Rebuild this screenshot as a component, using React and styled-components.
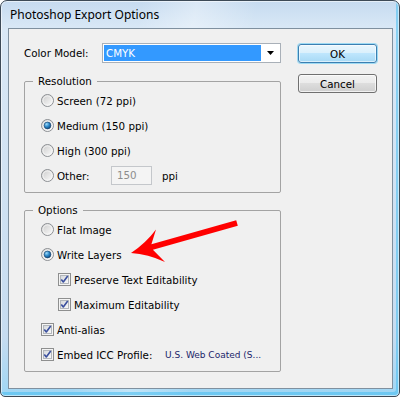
import React from 'react';
import styled, { createGlobalStyle } from 'styled-components';

const Global = createGlobalStyle`
  html, body { margin: 0; padding: 0; background: #ffffff; }
  body { width: 401px; height: 398px; overflow: hidden; }
`;

const Window = styled.div`
  position: relative;
  width: 400px;
  height: 397px;
  box-sizing: border-box;
  border: 1px solid #3d4a57;
  border-radius: 7px 7px 5px 5px;
  background:
    linear-gradient(100deg, rgba(255,255,255,0) 30%, rgba(255,255,255,0.35) 42%, rgba(255,255,255,0) 55%),
    linear-gradient(180deg, #c6dbf0 0%, #d9e8f6 7%, #d2e3f3 40%, #c6dcf0 85%, #9fd6f4 100%);
  box-shadow: inset 0 0 0 1px rgba(255,255,255,0.55), inset -2px -3px 0 1px rgba(70,190,240,0.55);
  display: flex;
  flex-direction: column;
  padding: 0 6px 7px 7px;
  font-family: "DejaVu Sans", Tahoma, sans-serif;
  font-size: 10.3px;
  color: #000;
`;

const TitleBar = styled.div`
  height: 27px;
  display: flex;
  align-items: center;
  padding-left: 2px;
  font-family: "Noto Sans", "Open Sans", sans-serif;
  font-size: 12px;
  color: #000;
`;

const Client = styled.div`
  flex: 1;
  border: 1px solid #7f909f;
  background: #f0f0f0;
  display: flex;
  gap: 17px;
  padding: 14px 0 0 15px;
`;

const LeftCol = styled.div`
  width: 257px;
  display: flex;
  flex-direction: column;
`;

const RightCol = styled.div`
  width: 79px;
  display: flex;
  flex-direction: column;
  gap: 11px;
  padding-top: 1px;
`;

const ModelRow = styled.div`
  display: flex;
  align-items: center;
  height: 20px;
`;

const ModelLabel = styled.span`
  width: 78px;
  flex: none;
`;

const Select = styled.div`
  flex: 1;
  height: 20px;
  box-sizing: border-box;
  border: 1px solid #a9b0b8;
  background: #fff;
  display: flex;
  padding: 1px;
`;

const SelValue = styled.div`
  flex: 1;
  background: #3399ff;
  color: #fff;
  line-height: 16px;
  padding-left: 2px;
`;

const SelArrow = styled.div`
  width: 18px;
  display: flex;
  align-items: center;
  justify-content: center;
`;

const Group = styled.fieldset`
  margin: ${p => p.$gap}px 0 0 0;
  padding: 0 0 4px 8px;
  border: 1px solid #a3a3a3;
  border-radius: 2px;
  min-width: 0;
`;

const Legend = styled.legend`
  padding: 0 5px;
  line-height: 13px;
`;

const Rows = styled.div`
  display: flex;
  flex-direction: column;
  padding-left: 8px;
`;

const Row = styled.div`
  height: 25px;
  display: flex;
  align-items: center;
  padding-left: ${p => (p.$indent ? 17 : 0)}px;
`;

const Text = styled.span`
  margin-left: 3px;
  white-space: nowrap;
  width: ${p => (p.$w ? `${p.$w}px` : 'auto')};
  flex: none;
`;

const NumInput = styled.div`
  width: 41px;
  height: 19px;
  box-sizing: border-box;
  border: 1px solid #c4c7cb;
  background: #f4f4f4;
  color: #8d8d8d;
  line-height: 17px;
  padding-left: 5px;
`;

const Unit = styled.span`
  margin-left: 10px;
`;

const Profile = styled.span`
  font-size: 9px;
  color: #1a246a;
  white-space: nowrap;
`;

const Button = styled.div`
  height: 19px;
  box-sizing: border-box;
  border-radius: 3px;
  border: 1px solid ${p => (p.$default ? '#3c7fb1' : '#707070')};
  background: ${p =>
    p.$default
      ? 'linear-gradient(180deg, #eaf6fd 0%, #d9f0fc 50%, #bee6fd 50%, #a7d9f5 100%)'
      : 'linear-gradient(180deg, #f2f2f2 0%, #ebebeb 50%, #dddddd 50%, #cfcfcf 100%)'};
  box-shadow: ${p => (p.$default ? '0 0 0 1px rgba(90,200,245,0.55), inset 0 0 0 1px rgba(255,255,255,0.6)' : 'inset 0 0 0 1px rgba(255,255,255,0.7)')};
  display: flex;
  align-items: center;
  justify-content: center;
`;

const Overlay = styled.svg`
  position: absolute;
  left: -1px;
  top: -1px;
  pointer-events: none;
`;

function Radio({ checked }) {
  return (
    <svg width="13" height="13" viewBox="0 0 13 13" style={{ flex: 'none' }}>
      <defs>
        <linearGradient id="rfill" x1="0" y1="0" x2="1" y2="1">
          <stop offset="0" stopColor="#c9c9c9" />
          <stop offset="1" stopColor="#ffffff" />
        </linearGradient>
        <radialGradient id="rdot" cx="0.35" cy="0.3" r="0.8">
          <stop offset="0" stopColor="#9fdcfb" />
          <stop offset="0.5" stopColor="#2a86c8" />
          <stop offset="1" stopColor="#103c6a" />
        </radialGradient>
      </defs>
      <circle cx="6.5" cy="6.5" r="6" fill="url(#rfill)" stroke="#8c8f93" />
      <circle cx="6.5" cy="6.5" r="4.6" fill="none" stroke="#f7f7f7" strokeWidth="0.8" />
      {checked && <circle cx="6.5" cy="6.5" r="3.4" fill="url(#rdot)" stroke="#15406b" strokeWidth="0.6" />}
    </svg>
  );
}

function Check() {
  return (
    <svg width="13" height="13" viewBox="0 0 13 13" style={{ flex: 'none' }}>
      <defs>
        <linearGradient id="cfill" x1="0" y1="0" x2="1" y2="1">
          <stop offset="0" stopColor="#d4d7da" />
          <stop offset="1" stopColor="#fbfbfb" />
        </linearGradient>
      </defs>
      <rect x="0.5" y="0.5" width="12" height="12" fill="#f4f4f4" stroke="#8e8f8f" />
      <rect x="2.5" y="2.5" width="8" height="8" fill="url(#cfill)" stroke="#b3b7bc" />
      <path d="M3.3 6.5 L5.3 9 L9.7 3" fill="none" stroke="#3a4f9e" strokeWidth="1.6" strokeLinejoin="round" />
    </svg>
  );
}

export default function App() {
  return (
    <>
      <Global />
      <Window>
        <TitleBar>Photoshop Export Options</TitleBar>
        <Client>
          <LeftCol>
            <ModelRow>
              <ModelLabel>Color Model:</ModelLabel>
              <Select>
                <SelValue>CMYK</SelValue>
                <SelArrow>
                  <svg width="7" height="4" viewBox="0 0 7 4">
                    <path d="M0 0 H7 L3.5 4 Z" fill="#000" />
                  </svg>
                </SelArrow>
              </Select>
            </ModelRow>

            <Group $gap={12}>
              <Legend>Resolution</Legend>
              <Rows>
                <Row><Radio /><Text>Screen (72 ppi)</Text></Row>
                <Row><Radio checked /><Text>Medium (150 ppi)</Text></Row>
                <Row><Radio /><Text>High (300 ppi)</Text></Row>
                <Row>
                  <Radio />
                  <Text $w={54}>Other:</Text>
                  <NumInput>150</NumInput>
                  <Unit>ppi</Unit>
                </Row>
              </Rows>
            </Group>

            <Group $gap={11}>
              <Legend>Options</Legend>
              <Rows>
                <Row><Radio /><Text>Flat Image</Text></Row>
                <Row><Radio checked /><Text>Write Layers</Text></Row>
                <Row $indent><Check /><Text>Preserve Text Editability</Text></Row>
                <Row $indent><Check /><Text>Maximum Editability</Text></Row>
                <Row><Check /><Text>Anti-alias</Text></Row>
                <Row>
                  <Check />
                  <Text $w={108}>Embed ICC Profile:</Text>
                  <Profile>U.S. Web Coated (S...</Profile>
                </Row>
              </Rows>
            </Group>
          </LeftCol>
          <RightCol>
            <Button $default>OK</Button>
            <Button>Cancel</Button>
          </RightCol>
        </Client>
        <Overlay width="401" height="398" viewBox="0 0 401 398">
          <path
            d="M131 253 Q146 243 156 229.5 L151.4 244.3 L236.2 220.3 L237.8 225.7 L152.9 249.7 L165 262 Q148 254 131 253 Z"
            fill="#ff0000"
          />
        </Overlay>
      </Window>
    </>
  );
}
